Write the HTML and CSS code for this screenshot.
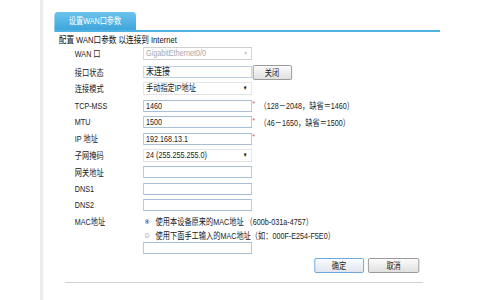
FILE: index.html
```html
<!DOCTYPE html>
<html lang="zh-CN">
<head>
    <meta charset="UTF-8">
    <title>设置WAN口参数</title>
    <link rel="stylesheet" href="styles.css">
</head>
<body>
    <div class="frame">
        <div class="page">
            <div class="main">
                <div class="panel">
                    <div class="tabbar">
                        <span class="tab">设置WAN口参数</span>
                    </div>
                    <p class="intro">配置 WAN口参数 以连接到 Internet</p>

                    <div class="form">
                        <div class="row row-first">
                            <span class="label">WAN 口</span>
                            <span class="select disabled">GigabitEthernet0/0<i class="arrow">▼</i></span>
                        </div>
                        <div class="row">
                            <span class="label">接口状态</span>
                            <span class="field status">未连接</span>
                            <button class="btn btn-close">关闭</button>
                        </div>
                        <div class="row">
                            <span class="label">连接模式</span>
                            <span class="select">手动指定IP地址<i class="arrow">▼</i></span>
                        </div>
                        <div class="row">
                            <span class="label">TCP-MSS</span>
                            <span class="field">1460</span>
                            <span class="req">*</span>
                            <span class="hint">（128－2048，缺省＝1460）</span>
                        </div>
                        <div class="row">
                            <span class="label">MTU</span>
                            <span class="field">1500</span>
                            <span class="req">*</span>
                            <span class="hint">（46－1650，缺省＝1500）</span>
                        </div>
                        <div class="row">
                            <span class="label">IP 地址</span>
                            <span class="field">192.168.13.1</span>
                            <span class="req">*</span>
                        </div>
                        <div class="row">
                            <span class="label">子网掩码</span>
                            <span class="select">24 (255.255.255.0)<i class="arrow">▼</i></span>
                        </div>
                        <div class="row">
                            <span class="label">网关地址</span>
                            <span class="field"></span>
                        </div>
                        <div class="row">
                            <span class="label">DNS1</span>
                            <span class="field"></span>
                        </div>
                        <div class="row">
                            <span class="label">DNS2</span>
                            <span class="field"></span>
                        </div>
                        <div class="mac">
                            <span class="label mac-label">MAC地址</span>
                            <div class="mac-options">
                                <label class="option">
                                    <span class="radio checked"></span>使用本设备原来的MAC地址 （600b-031a-4757）
                                </label>
                                <label class="option option-second">
                                    <span class="radio"></span>使用下面手工输入的MAC地址（如：000F-E254-F5E0）
                                </label>
                                <span class="field"></span>
                            </div>
                        </div>
                    </div>

                    <div class="actions">
                        <button class="btn btn-ok">确定</button>
                        <button class="btn">取消</button>
                    </div>
                    <hr class="rule">
                </div>
            </div>
        </div>
    </div>
</body>
</html>
```

FILE: styles.css
```css
html, body {
    margin: 0;
    overflow: hidden;
    background: #ffffff;
}

body {
    font-family: "Liberation Sans", "Noto Sans CJK SC", sans-serif;
    font-size: 9px;
    color: #222;
}

.frame {
    width: 480px;
    height: 300px;
    overflow: hidden;
}

/* the whole form is drawn a little narrow, like the original UI */
.page {
    width: 600px;
    height: 300px;
    padding-left: 50px;
    box-sizing: border-box;
    transform: scaleX(0.8);
    transform-origin: 0 0;
}

.main {
    height: 100%;
    border-left: 4px solid #ececec;
    padding-left: 13.5px;
}

.panel {
    width: 482.5px;
}

.tabbar {
    padding-top: 12px;
    border-bottom: 2px solid #4fb2e3;
    height: 18px;
}

.tab {
    display: inline-block;
    width: 102.5px;
    height: 18px;
    line-height: 18px;
    text-align: center;
    color: #fff;
    background: linear-gradient(#6cc3ec, #3ea6dc);
    border-radius: 4px 4px 0 0;
}

.intro {
    margin: 2px 0 0 6px;
    height: 11px;
    line-height: 11px;
    font-size: 9.5px;
    color: #111;
}

.form {
    padding-left: 26px;
}

.row {
    display: flex;
    align-items: center;
    height: 16.625px;
}

.row-first {
    height: 16px;
    margin-bottom: 3px;
}

.label {
    width: 85px;
    flex: none;
}

.field,
.select {
    position: relative;
    display: block;
    box-sizing: border-box;
    width: 136px;
    height: 12px;
    line-height: 10px;
    padding: 0 3px;
    border: 1px solid #a9bfd6;
    background: #fff;
    white-space: nowrap;
}

.field.status {
    font-size: 10px;
    border-color: #bfd0e2;
}

.select {
    border-color: #e3e3e3;
    height: 13px;
    line-height: 11px;
}

.select.disabled {
    color: #a8a8a8;
    border-color: #cfcfcf;
}

.arrow {
    position: absolute;
    right: 4px;
    top: 0;
    font-style: normal;
    font-size: 6px;
    color: #111;
}

.select.disabled .arrow {
    color: #b5b5b5;
    font-size: 5px;
}

.req {
    color: #e23a3a;
    font-size: 8px;
    margin: -4px 0 0 1px;
    width: 9px;
}

.hint {
    color: #222;
}

.btn {
    box-sizing: border-box;
    height: 15px;
    padding: 0;
    font-family: inherit;
    font-size: 9px;
    color: #222;
    background: linear-gradient(#fbfbfb, #e0e0e0);
    border: 1px solid #8e8e8e;
    border-radius: 2px;
}

.btn-close {
    width: 49px;
    margin-left: 1px;
}

.mac {
    display: flex;
}

.mac-label {
    height: 16.625px;
    line-height: 16.625px;
}

.mac-options {
    display: flex;
    flex-direction: column;
}

.option {
    display: flex;
    align-items: center;
    height: 16.625px;
    margin-left: 2px;
    white-space: nowrap;
}

.option-second {
    height: 13px;
    margin-top: -1px;
}

.radio {
    width: 6px;
    height: 5px;
    margin-right: 8px;
    border-radius: 50%;
    border: 1px solid #c4c4c4;
    background: #f4f4f4;
    box-sizing: border-box;
}

.radio.checked {
    border-color: #9bb0c4;
    background: radial-gradient(circle, #2f7fc8 40%, #dfe8f1 55%);
}

.actions {
    display: flex;
    justify-content: flex-end;
    gap: 5px;
    margin-top: 4px;
    padding-right: 26px;
}

.actions .btn {
    width: 64px;
}

.actions .btn-ok {
    width: 62.5px;
    border-color: #5d9fd8;
    background: linear-gradient(#fafcfe, #dfe6ee);
}

.rule {
    margin: 9px 21px 0 13.5px;
    border: 0;
    border-top: 1px solid #cfcfcf;
}
```
